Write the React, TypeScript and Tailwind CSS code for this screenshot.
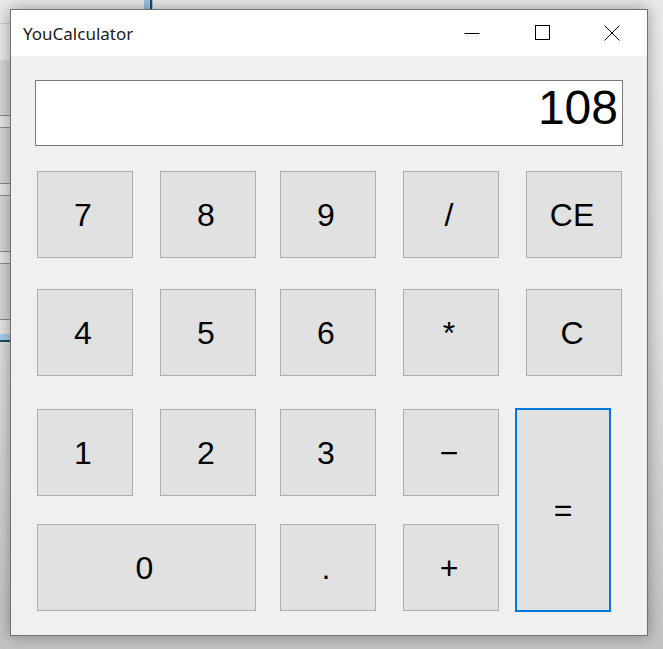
import React, { useState } from 'react';

// button placement on a grid that has gap tracks baked in (gaps are uneven in the window)
const keys: { label: string; col: string; row: string }[] = [
  { label: '7', col: 'col-start-1', row: 'row-start-1' },
  { label: '8', col: 'col-start-3', row: 'row-start-1' },
  { label: '9', col: 'col-start-5', row: 'row-start-1' },
  { label: '/', col: 'col-start-7', row: 'row-start-1' },
  { label: 'CE', col: 'col-start-9', row: 'row-start-1' },
  { label: '4', col: 'col-start-1', row: 'row-start-3' },
  { label: '5', col: 'col-start-3', row: 'row-start-3' },
  { label: '6', col: 'col-start-5', row: 'row-start-3' },
  { label: '*', col: 'col-start-7', row: 'row-start-3' },
  { label: 'C', col: 'col-start-9', row: 'row-start-3' },
  { label: '1', col: 'col-start-1', row: 'row-start-5' },
  { label: '2', col: 'col-start-3', row: 'row-start-5' },
  { label: '3', col: 'col-start-5', row: 'row-start-5' },
  { label: '−', col: 'col-start-7', row: 'row-start-5' },
  { label: '.', col: 'col-start-5', row: 'row-start-7' },
  { label: '+', col: 'col-start-7', row: 'row-start-7' },
];

function TitleBar() {
  return (
    <div className="flex h-[46px] items-center justify-between bg-white">
      <span className="pl-[12px] pt-[2px] font-['Noto_Sans',sans-serif] text-[17px] text-[#1a1a1a]">
        YouCalculator
      </span>
      <div className="flex h-full items-center">
        <div className="flex w-[70px] justify-center">
          <svg width="16" height="16" viewBox="0 0 16 16">
            <path d="M0.5 8.5h15" stroke="#000" strokeWidth="1" />
          </svg>
        </div>
        <div className="flex w-[70px] justify-center">
          <svg width="16" height="16" viewBox="0 0 16 16">
            <rect x="1.5" y="0.5" width="14" height="14" fill="none" stroke="#000" strokeWidth="1" />
          </svg>
        </div>
        <div className="flex w-[70px] justify-center">
          <svg width="16" height="16" viewBox="0 0 16 16">
            <path d="M0.5 0.5l15 15M15.5 0.5l-15 15" stroke="#000" strokeWidth="1" />
          </svg>
        </div>
      </div>
    </div>
  );
}

function Key({ label, focused = false, className = '' }: { label: string; focused?: boolean; className?: string }) {
  return (
    <button
      className={`flex items-center justify-center bg-[#e1e1e1] font-['Liberation_Sans',Arial,sans-serif] text-[32px] leading-none text-black ${
        focused ? 'border-2 border-[#0078d7]' : 'border border-[#adadad]'
      } ${className}`}
    >
      {label}
    </button>
  );
}

export default function App() {
  const [value] = useState('108');

  return (
    <div className="relative h-[649px] w-[663px] overflow-hidden bg-gradient-to-b from-[#e9e9e9] via-[#dedede] to-[#c2c2c2] pl-[10px] pt-[9px]">
      {/* desktop clutter behind the window */}
      <div className="absolute left-[144px] top-0 h-[10px] w-[9px] bg-[#9cc3e0]">
        <div className="ml-[6px] h-full w-[2px] bg-[#1f4f5e]" />
      </div>
      <div className="absolute left-0 top-0 h-[24px] w-[100px] border-b border-[#c8c8c8]" />
      <div className="absolute left-0 top-[60px] flex w-[10px] flex-col">
        <div className="h-[55px] bg-[#d4d4d4]" />
        <div className="h-px bg-[#8a8a8a]" />
        <div className="h-[11px] bg-[#e4e4e4]" />
        <div className="h-px bg-[#8a8a8a]" />
        <div className="h-[55px] bg-[#d4d4d4]" />
        <div className="h-px bg-[#8a8a8a]" />
        <div className="h-[11px] bg-[#e4e4e4]" />
        <div className="h-px bg-[#8a8a8a]" />
        <div className="h-[55px] bg-[#d4d4d4]" />
        <div className="h-px bg-[#8a8a8a]" />
        <div className="h-[11px] bg-[#e4e4e4]" />
        <div className="h-px bg-[#8a8a8a]" />
        <div className="h-[55px] bg-[#d4d4d4]" />
        <div className="h-px bg-[#8a8a8a]" />
        <div className="h-[14px] bg-[#e4e4e4]" />
        <div className="h-[6px] bg-[#a9cde8]" />
        <div className="h-[2px] bg-[#1f4f5e]" />
      </div>

      <div className="relative flex h-[627px] w-[638px] flex-col border border-[#707070] bg-[#f0f0f0] shadow-[0_0_14px_rgba(0,0,0,0.35)]">
        <TitleBar />

        <div className="flex flex-col pl-[24px] pt-[24px]">
          <div className="flex h-[66px] w-[588px] items-start justify-end border border-[#7a7a7a] bg-white pr-[4px] pt-[3px] font-['Liberation_Sans',Arial,sans-serif] text-[48px] leading-none text-black">
            {value}
          </div>

          <div className="ml-[2px] mt-[25px] grid grid-cols-[96px_27px_96px_24px_96px_27px_96px_27px_96px] grid-rows-[87px_31px_87px_33px_87px_28px_87px]">
            {keys.map((k) => (
              <Key key={k.label} label={k.label} className={`${k.col} ${k.row} pr-[4px]`} />
            ))}
            <Key label="0" className="col-span-3 col-start-1 row-start-7 pr-[4px]" />
            <Key
              label="="
              focused
              className="col-start-9 row-span-3 row-start-5 -my-px -ml-[11px] mr-[11px]"
            />
          </div>
        </div>
      </div>
    </div>
  );
}
